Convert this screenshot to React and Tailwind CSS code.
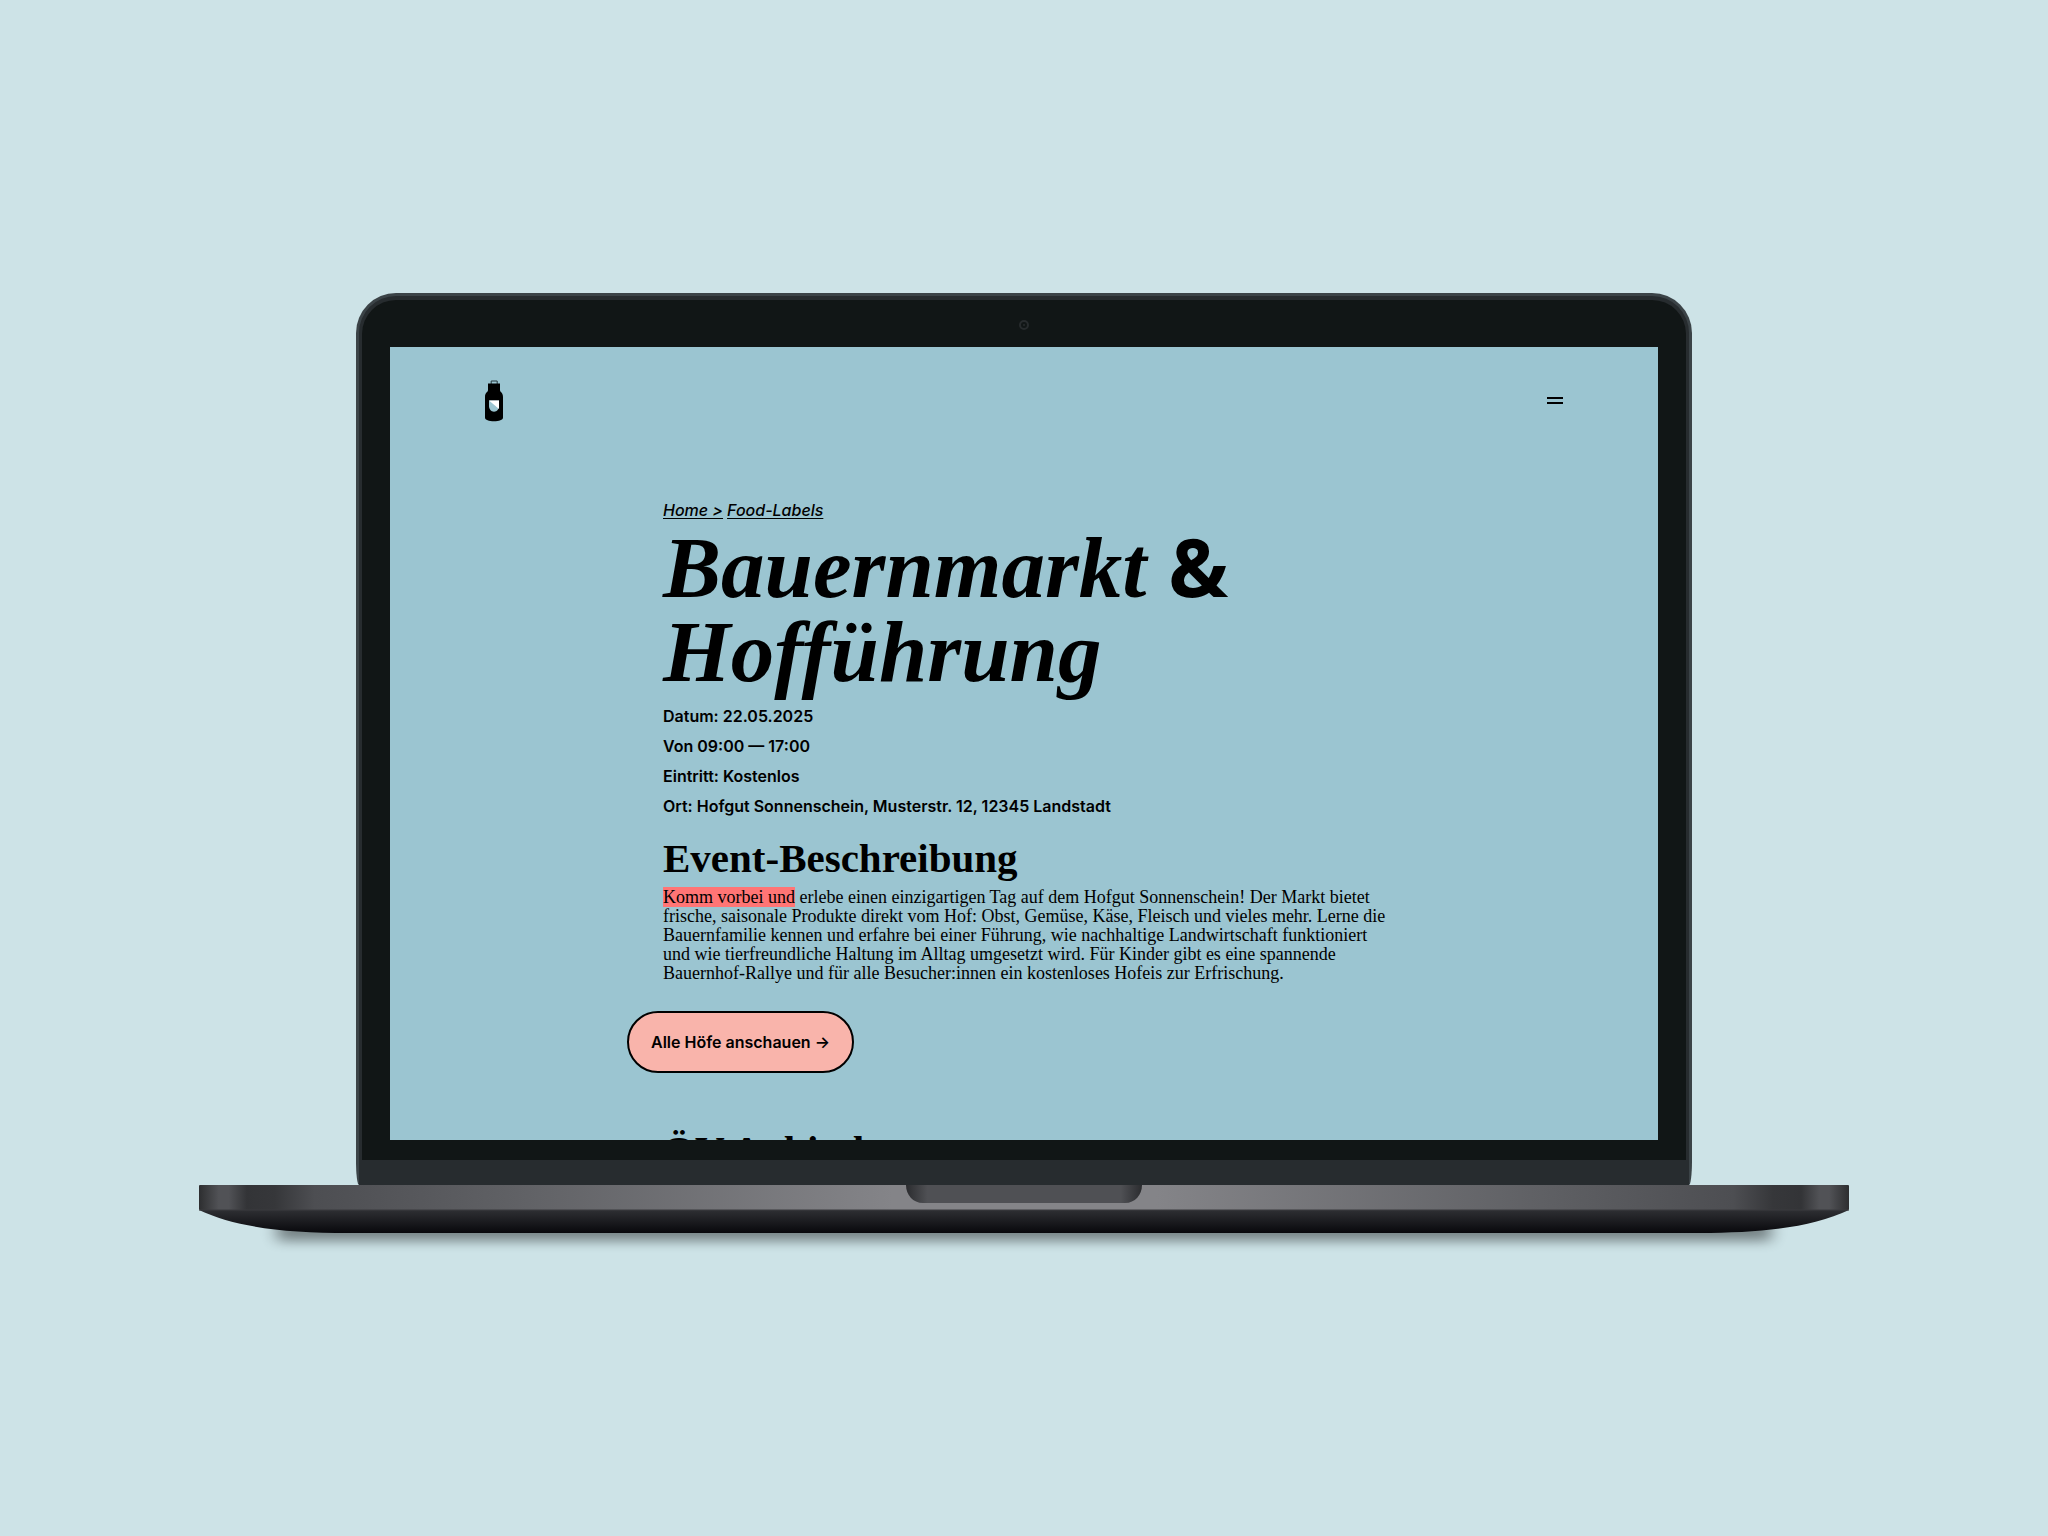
const details = [
  'Datum: 22.05.2025',
  'Von 09:00 — 17:00',
  'Eintritt: Kostenlos',
  'Ort: Hofgut Sonnenschein, Musterstr. 12, 12345 Landstadt',
];

function BottleLogo() {
  return (
    <svg viewBox="0 0 18 42" className="h-[42px] w-[18px]" aria-hidden="true">
      <path d="M6.2 4V1H12.2V4" fill="none" stroke="#24363c" strokeWidth="1" />
      <path
        d="M3 3.6H15V10C15 12.5 18 12 18 17V37.5C18 40 14 41.2 9 41.2S0 40 0 37.5V17C0 12 3 12.5 3 10Z"
        fill="#000"
      />
      <path d="M4 20.5H14V26C14 29 12 31.7 9 31.7S4 29 4 26Z" fill="#9bc5d1" />
      <path d="M4 20.5H14V29Z" fill="#fff" />
    </svg>
  );
}

function LaptopBase() {
  return (
    <svg viewBox="0 0 1650 58" className="block h-auto w-full overflow-visible" aria-hidden="true">
      <defs>
        <linearGradient id="deck" x1="0" x2="1" y1="0" y2="0">
          <stop offset="0" stopColor="#2d2e30" />
          <stop offset="0.012" stopColor="#515256" />
          <stop offset="0.018" stopColor="#515256" />
          <stop offset="0.029" stopColor="#333437" />
          <stop offset="0.046" stopColor="#36373a" />
          <stop offset="0.07" stopColor="#4d4e52" />
          <stop offset="0.18" stopColor="#5e5f63" />
          <stop offset="0.42" stopColor="#848488" />
          <stop offset="0.58" stopColor="#848488" />
          <stop offset="0.82" stopColor="#5e5f63" />
          <stop offset="0.93" stopColor="#4d4e52" />
          <stop offset="0.954" stopColor="#36373a" />
          <stop offset="0.971" stopColor="#333437" />
          <stop offset="0.982" stopColor="#515256" />
          <stop offset="0.988" stopColor="#515256" />
          <stop offset="1" stopColor="#2d2e30" />
        </linearGradient>
        <linearGradient id="belly" x1="0" x2="0" y1="0" y2="1">
          <stop offset="0" stopColor="#2e2f33" />
          <stop offset="1" stopColor="#08080c" />
        </linearGradient>
        <linearGradient id="notch" x1="0" x2="1" y1="0" y2="0">
          <stop offset="0" stopColor="#2b2c2f" />
          <stop offset="0.09" stopColor="#4f5054" />
          <stop offset="0.91" stopColor="#4f5054" />
          <stop offset="1" stopColor="#2b2c2f" />
        </linearGradient>
        <filter id="soft" x="-5%" y="-100%" width="110%" height="300%">
          <feGaussianBlur stdDeviation="8 6" />
        </filter>
      </defs>
      <rect x="78" y="34" width="1494" height="22" fill="#000" opacity="0.42" filter="url(#soft)" />
      <path d="M0 25C36 42 85 48 150 48H1500C1565 48 1614 42 1650 25Z" fill="url(#belly)" />
      <rect width="1650" height="25" rx="1" fill="url(#deck)" />
      <rect y="24.5" width="1650" height="1" fill="#3a3b3e" />
      <path d="M707 0H943C943 10 936 18 926 18H724C714 18 707 10 707 0Z" fill="url(#notch)" />
    </svg>
  );
}

function Website() {
  return (
    <div className="aspect-[1268/793] overflow-hidden bg-[#9bc5d1] text-black">
      <header className="flex items-center justify-between px-[95px] pt-[33px]">
        <a href="#start" aria-label="Startseite">
          <BottleLogo />
        </a>
        <button type="button" aria-label="Menü" className="flex w-4 flex-col gap-[3px]">
          <span className="h-0.5 w-full bg-black" />
          <span className="h-0.5 w-full bg-black" />
        </button>
      </header>

      <main className="mx-auto max-w-[722px] pt-[76px] font-['Liberation_Serif',serif]">
        <nav className="flex gap-1 font-['Inter',sans-serif] text-base leading-6 font-medium italic">
          <a href="#home" className="underline underline-offset-2">Home &gt;</a>
          <a href="#labels" className="underline underline-offset-2">Food-Labels</a>
        </nav>
        <h1 className="pt-1 pb-[7px] text-[87px] leading-[84px] font-bold italic">
          Bauernmarkt{' '}
          <span className="font-['Open_Sans',sans-serif] text-[80px] leading-none font-bold not-italic">&amp;</span>{' '}
          Hofführung
        </h1>
        <ul className="font-['Inter',sans-serif] text-base leading-[30px] font-semibold">
          {details.map((line) => (
            <li key={line}>{line}</li>
          ))}
        </ul>
        <h2 className="pt-[13px] text-[41px] leading-12 font-bold">Event-Beschreibung</h2>
        <p className="pt-1.5 text-lg leading-[19px] whitespace-nowrap">
          <mark className="bg-[#ff7575] text-black">Komm vorbei und</mark>{' '}
          erlebe einen einzigartigen Tag auf dem Hofgut Sonnenschein! Der Markt bietet
          <br />
          frische, saisonale Produkte direkt vom Hof: Obst, Gemüse, Käse, Fleisch und vieles mehr. Lerne die
          <br />
          Bauernfamilie kennen und erfahre bei einer Führung, wie nachhaltige Landwirtschaft funktioniert
          <br />
          und wie tierfreundliche Haltung im Alltag umgesetzt wird. Für Kinder gibt es eine spannende
          <br />
          Bauernhof-Rallye und für alle Besucher:innen ein kostenloses Hofeis zur Erfrischung.
        </p>
        <button
          type="button"
          className="mt-7 -ml-9 flex items-center rounded-full border-2 border-black bg-[#f9b4ab] px-[22px] py-4 font-['Inter',sans-serif] text-base leading-[26px] font-semibold"
        >
          Alle Höfe anschauen →
        </button>
        <h2 className="pt-[53px] text-[41px] leading-12 font-bold">ÖV Anbindung</h2>
      </main>
    </div>
  );
}

export default function App() {
  return (
    <div className="flex min-h-screen items-center justify-center bg-[#cde3e7]">
      <div className="flex w-[81%] max-w-[1650px] flex-col items-center">
        <div className="w-[81%] rounded-t-[40px] bg-[#3b4347] px-[3px] pt-[3px] [border-bottom-left-radius:3px_24px] [border-bottom-right-radius:3px_24px]">
          <div className="rounded-t-[37px] bg-[#272c2f] px-[3px] pt-1 pb-[25px]">
            <div className="rounded-t-[34px] bg-[#111616] px-7 pb-5">
              <div className="flex h-[47px] items-center justify-center pt-1">
                <span className="flex size-2.5 items-center justify-center rounded-full border-2 border-[#272b2d]">
                  <span className="size-0.5 rounded-full bg-[#272b2d]" />
                </span>
              </div>
              <Website />
            </div>
          </div>
        </div>
        <LaptopBase />
      </div>
    </div>
  );
}
